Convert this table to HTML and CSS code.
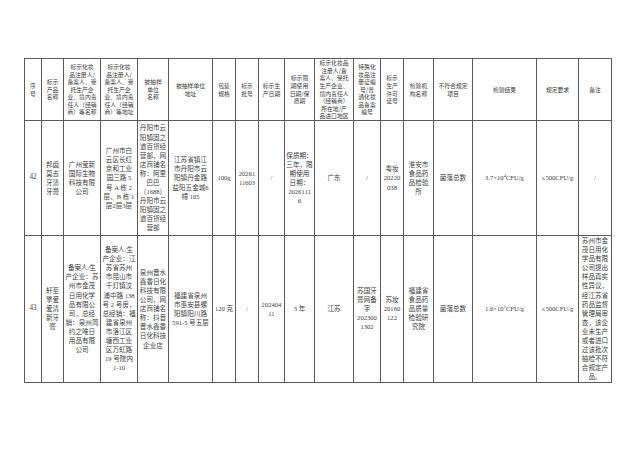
FILE: index.html
```html
<!DOCTYPE html>
<html lang="zh-CN">
<head>
<meta charset="utf-8">
<title>抽检不符合规定产品</title>
<link rel="stylesheet" href="styles.css">
</head>
<body>
<table class="grid">
  <colgroup>
    <col class="c17"><col class="c22"><col class="c37"><col class="c37"><col class="c31"><col class="c44">
    <col class="c23"><col class="c23"><col class="c26"><col class="c30"><col class="c39"><col class="c27">
    <col class="c23"><col class="c30"><col class="c39"><col class="c64"><col class="c42"><col class="c33">
  </colgroup>
  <thead>
    <tr class="head">
      <th>序<br>号</th>
      <th>标示<br>产品<br>名称</th>
      <th>标示化妆<br>品注册人/<br>备案人、受<br>托生产企<br>业、境内责<br>任人（经销<br>商）等名称</th>
      <th>标示化妆<br>品注册人/<br>备案人、受<br>托生产企<br>业、境内责<br>任人（经销<br>商）等地址</th>
      <th>被抽样<br>单位<br>名称</th>
      <th>被抽样单位<br>地址</th>
      <th>包装<br>规格</th>
      <th>标示<br>批号</th>
      <th>标示生<br>产日期</th>
      <th>标示限<br>期使用<br>日期/保<br>质期</th>
      <th>标示化妆品<br>注册人/备<br>案人、受托<br>生产企业、<br>境内责任人<br>（经销商）<br>所在地/产<br>品进口地区</th>
      <th>特殊化<br>妆品注<br>册证编<br>号/普<br>通化妆<br>品备案<br>编号</th>
      <th>标示<br>生产<br>许可<br>证号</th>
      <th>检验机<br>构名称</th>
      <th>不符合规定<br>项目</th>
      <th>检验结果</th>
      <th>规定要求</th>
      <th>备注</th>
    </tr>
  </thead>
  <tbody>
    <tr class="row42">
      <td class="num">42</td>
      <td>邦齿<br>莫去<br>牙渍<br>牙膏</td>
      <td>广州莹新<br>国际生物<br>科技有限<br>公司</td>
      <td>广州市白<br>云区长红<br>京和工业<br>园三路 5<br>号 A 栋 2<br>层、B 栋 1<br>层2层3层</td>
      <td>丹阳市云<br>阳镇固之<br>道百货经<br>营部，网<br>店商铺名<br>称：阿里<br>巴巴<br>（1688）<br>丹阳市云<br>阳镇固之<br>道百货经<br>营部</td>
      <td>江苏省镇江<br>市丹阳市云<br>阳镇丹金路<br>益阳五金城6<br>幢 105</td>
      <td>100g</td>
      <td>20261<br>11603</td>
      <td>/</td>
      <td>保质期：<br>三年，限<br>期使用<br>日期：<br>2026111<br>6</td>
      <td>广东</td>
      <td>/</td>
      <td>粤妆<br>20220<br>038</td>
      <td>淮安市<br>食品药<br>品检验<br>所</td>
      <td>菌落总数</td>
      <td>3.7×10<sup class="exp">4</sup>CFU/g</td>
      <td>≤500CFU/g</td>
      <td>/</td>
    </tr>
    <tr class="row43">
      <td class="num">43</td>
      <td>轩至<br>擎爱<br>爱清<br>新牙<br>膏</td>
      <td>备案人/生<br>产企业：苏<br>州市金茂<br>日用化学<br>品有限公<br>司，总经<br>销：泉州简<br>约之唯日<br>用品有限<br>公司</td>
      <td>备案人/生<br>产企业：江<br>苏省苏州<br>市昆山市<br>千灯镇汶<br>浦中路 138<br>号 2 号房，<br>总经销：福<br>建省泉州<br>市洛江区<br>塘西工业<br>区万虹路<br>19 号院内<br>1-10</td>
      <td>泉州晋水<br>鑫香日化<br>科技有限<br>公司，网<br>店商铺名<br>称：抖音<br>晋水鑫香<br>日化科技<br>企业店</td>
      <td>福建省泉州<br>市惠安县螺<br>阳镇阳川路<br>591-5 号五层</td>
      <td>120 克</td>
      <td>/</td>
      <td>202404<br>11</td>
      <td>3 年</td>
      <td>江苏</td>
      <td>苏国牙<br>膏网备<br>字<br>202300<br>1302</td>
      <td>苏妆<br>20160<br>122</td>
      <td>福建省<br>食品药<br>品质量<br>检验研<br>究院</td>
      <td>菌落总数</td>
      <td>1.6×10<sup class="exp">5</sup>CFU/g</td>
      <td>≤500CFU/g</td>
      <td>苏州市金<br>茂日用化<br>学品有限<br>公司提出<br>样品真实<br>性异议，<br>经江苏省<br>药品监督<br>管理局审<br>查，该企<br>业未生产<br>或者进口<br>过该批次<br>抽检不符<br>合规定产<br>品。</td>
    </tr>
  </tbody>
</table>
</body>
</html>
```

FILE: styles.css
```css
html, body {
  margin: 0;
  padding: 0;
  background: #ffffff;
}

body {
  width: 640px;
  height: 453px;
  overflow: hidden;
}

.grid {
  margin: 58px 0 0 24px;
  width: 587px;
  table-layout: fixed;
  border-collapse: collapse;
  color: #404040;
  font-family: "Liberation Serif", "Noto Sans CJK SC", serif;
  font-size: 6.6px;
  line-height: 9.1px;
}

.grid th,
.grid td {
  border: 1px solid #5a5a5a;
  padding: 0;
  text-align: center;
  vertical-align: middle;
  white-space: nowrap;
  overflow: hidden;
}

.grid th {
  font-family: "Noto Sans CJK SC", sans-serif;
  font-weight: normal;
  font-size: 5.8px;
  line-height: 7.6px;
  color: #3a3a3a;
}

.head { height: 62px; }
.row42 { height: 115px; }
.row43 { height: 146px; }

.num { font-size: 7.2px; }

.exp {
  font-size: 4.5px;
  line-height: 0;
  vertical-align: 3px;
}

.c17 { width: 17px; }
.c22 { width: 22px; }
.c23 { width: 23px; }
.c26 { width: 26px; }
.c27 { width: 27px; }
.c30 { width: 30px; }
.c31 { width: 31px; }
.c33 { width: 33px; }
.c37 { width: 37px; }
.c39 { width: 39px; }
.c42 { width: 42px; }
.c44 { width: 44px; }
.c64 { width: 64px; }
```
